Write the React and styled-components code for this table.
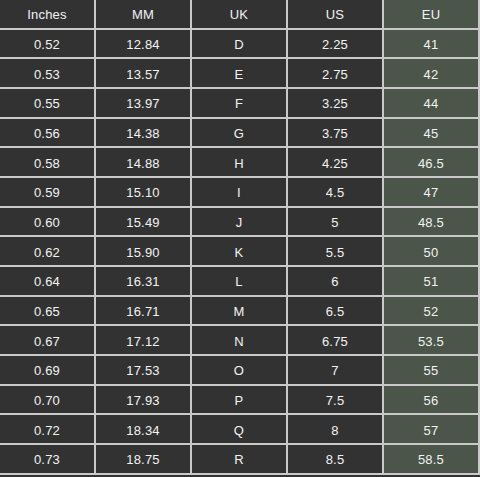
import React from "react";
import styled, { createGlobalStyle } from "styled-components";

const Global = createGlobalStyle`
  html, body { margin: 0; padding: 0; background: #333333; }
  body { width: 480px; height: 477px; overflow: hidden; }
`;

const Table = styled.div`
  display: grid;
  grid-template-columns: repeat(5, 96px);
  width: 480px;
  font-family: "Liberation Sans", Arial, sans-serif;
  font-size: 13px;
  letter-spacing: 0.2px;
  color: #f2f2f2;
`;

const Cell = styled.div`
  box-sizing: border-box;
  height: 29.67px;
  display: flex;
  align-items: center;
  justify-content: center;
  background: ${(p) => (p.$eu ? "#4b554a" : "#323232")};
  border-right: 2px solid #c9c9c9;
  border-bottom: 2px solid #c9c9c9;
  padding-top: 2px;
`;

const header = ["Inches", "MM", "UK", "US", "EU"];
const rows = [
  ["0.52", "12.84", "D", "2.25", "41"],
  ["0.53", "13.57", "E", "2.75", "42"],
  ["0.55", "13.97", "F", "3.25", "44"],
  ["0.56", "14.38", "G", "3.75", "45"],
  ["0.58", "14.88", "H", "4.25", "46.5"],
  ["0.59", "15.10", "I", "4.5", "47"],
  ["0.60", "15.49", "J", "5", "48.5"],
  ["0.62", "15.90", "K", "5.5", "50"],
  ["0.64", "16.31", "L", "6", "51"],
  ["0.65", "16.71", "M", "6.5", "52"],
  ["0.67", "17.12", "N", "6.75", "53.5"],
  ["0.69", "17.53", "O", "7", "55"],
  ["0.70", "17.93", "P", "7.5", "56"],
  ["0.72", "18.34", "Q", "8", "57"],
  ["0.73", "18.75", "R", "8.5", "58.5"],
];

export default function App() {
  return (
    <>
      <Global />
      <Table>
        {[header, ...rows].map((r, i) =>
          r.map((v, j) => (
            <Cell key={`${i}-${j}`} $eu={j === 4}>
              {v}
            </Cell>
          ))
        )}
      </Table>
    </>
  );
}
